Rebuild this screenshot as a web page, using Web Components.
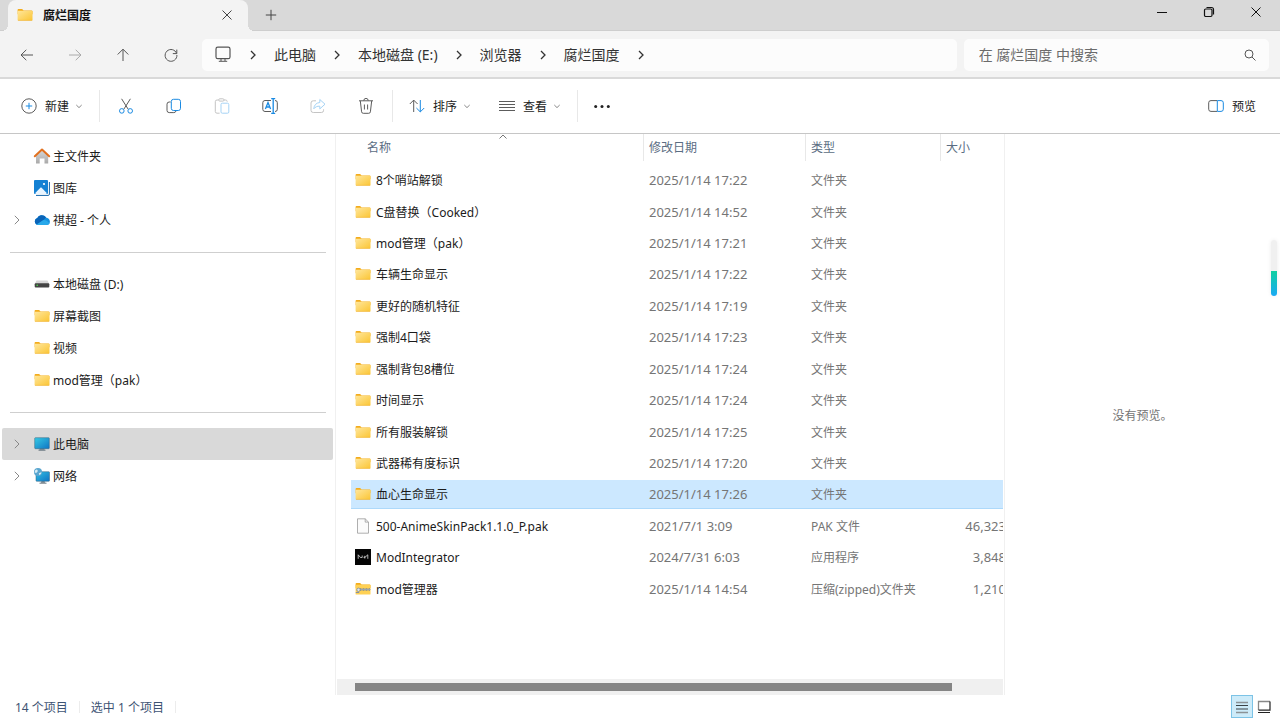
<!DOCTYPE html>
<html lang="zh-CN">
<head>
<meta charset="utf-8">
<title>腐烂国度</title>
<style>
  html, body { margin: 0; height: 100%; }
  body {
    font-family: "Noto Sans", "Noto Sans CJK SC", sans-serif;
    font-size: 12px;
    line-height: 16px;
    color: #1b1b1b;
    background: #fff;
    overflow: hidden;
  }
</style>
</head>
<body>
<file-explorer></file-explorer>

<script>
const ICONS = {
  folder: `<defs><linearGradient id="f" x1="0" y1="0" x2="1" y2="1"><stop offset="0" stop-color="#ffe69a"/><stop offset="1" stop-color="#fbc534"/></linearGradient></defs>
    <path d="M.6 2.900c0-.6.3-1 .9-1h3.600l1.500 1.500h8c.6 0 .9.3.9.8v3H.6z" fill="#f3ac1c"/>
    <rect x=".6" y="3.800" width="14.900" height="9.800" rx=".7" fill="url(#f)"/><path d="M1 13.400h14.100" stroke="#eeb02c" stroke-width=".6"/>`,
  home: `<defs><linearGradient id="h" x1="0" y1="0" x2="0" y2="1"><stop offset="0" stop-color="#d9d9d9"/><stop offset="1" stop-color="#a9a9a9"/></linearGradient></defs>
    <path d="M2 7l6-5.200L14.200 7v8.500H10.500V10.500H5.700v5H2z" fill="url(#h)"/><path d="M.8 8.200L8 1.500l7.200 6.700" fill="none" stroke="#e2711f" stroke-width="2" stroke-linejoin="round" stroke-linecap="round"/>`,
  gallery: `<path d="M15.400 2v12.200c0 .7-.4 1.200-1.200 1.200H2" fill="none" stroke="#1565a8" stroke-width="1"/><rect x="0" y="0" width="14" height="14" rx="1" fill="#1481d3"/>
    <path d="M1.500 14v-1.300l4.900-5c.4-.4.8-.4 1.200 0l4.900 5V14z" fill="#e9f5ff"/><circle cx="10" cy="4" r="1.100" fill="#fff"/>`,
  cloud: `<path d="M4 13a3.600 3.600 0 01-.6-7A5 5 0 0112 5.500c2 .3 3.900 1.800 3.900 4a3.500 3.500 0 01-3.500 3.500z" fill="#1490df"/>
    <path d="M3.400 6A5 5 0 0112 5.500L8.500 9 3 12.800A3.600 3.600 0 013.400 6z" fill="#0a64b8"/><path d="M2.500 12.500L9 8.300c1.500-.8 3.500-.4 6.500 2.900a3.500 3.500 0 01-3.100 1.800H4z" fill="#28a8ea"/>`,
  disk: `<path d="M2.500 4.500h11L15.200 8H.8z" fill="#d7d7d7"/><rect x=".7" y="7.200" width="14.600" height="4.300" rx="1" fill="#444"/><circle cx="3.200" cy="9.200" r=".8" fill="#4de04d"/>`,
  pc: `<defs><linearGradient id="p" x1="0" y1="0" x2="1" y2="1"><stop offset="0" stop-color="#37cbe4"/><stop offset="1" stop-color="#0e74c4"/></linearGradient></defs>
    <path d="M6 12h4l.8 2.200H5.200z" fill="#8d979f"/><path d="M4.500 14.200h7" stroke="#6f7b84"/><rect x=".7" y="1.700" width="14.600" height="11" rx=".7" fill="url(#p)" stroke="#35617c" stroke-width=".5"/>`,
  network: `<defs><linearGradient id="n" x1="0" y1="0" x2="1" y2="1"><stop offset="0" stop-color="#33bfe2"/><stop offset="1" stop-color="#0e74c4"/></linearGradient></defs>
    <path d="M7.500 13h3l.8 2H6.700z" fill="#8d979f"/><path d="M5.500 15.200h7" stroke="#6f7b84"/><rect x="2" y="3.700" width="13.500" height="9.600" rx=".7" fill="url(#n)" stroke="#35617c" stroke-width=".5"/>
    <circle cx="4" cy="4" r="4" fill="#5aa6cf"/><path d="M1.200 2.200C3 .8 4 2 3.600 3.500S1.600 5 .6 4.500zM4.800 5.200l2.600-.9c0 1.200-.8 2.300-2 2.900z" fill="#d8edf6"/>`,
  file: `<path d="M2.500.8h7.700l3.300 3.300v11.100h-11z" fill="#fbfbfb" stroke="#9a9a9a" stroke-width=".8"/><path d="M10.200.8v3.300h3.300" fill="none" stroke="#9a9a9a" stroke-width=".8"/>`,
  app: `<rect width="16" height="16" fill="#050505"/><path d="M3.200 9.800V5.800l2.300 2.700h1.700V6.500M8.500 8.300h1.500l2.800-2.500v4M9.800 6.800v2.800" fill="none" stroke="#ddd" stroke-width=".8"/>`,
  zip: `<path d="M.6 2.900c0-.6.3-1 .9-1h3.600l1.500 1.500h8c.6 0 .9.3.9.8v3H.6z" fill="#f3ac1c"/><rect x=".6" y="3.800" width="14.900" height="9.800" rx=".7" fill="#ffd154"/>
    <path d="M5 8.500h10.500" stroke="#7e8a96" stroke-width="2.400" stroke-dasharray="1 .5"/><path d="M5 8.500h10.500" stroke="#9aa4ae" stroke-width="1"/><circle cx="3.500" cy="8.800" r="1.700" fill="#dfe5ea" stroke="#7e8a96" stroke-width=".8"/><path d="M.8 11.500h3.400" stroke="#8792a0"/>`,
  close: `<path d="M3.500 3.500l9 9M12.500 3.500l-9 9" class="s"/>`,
  plus: `<path d="M8 2.800v10.400M2.800 8h10.400" class="s"/>`,
  minimize: `<path d="M3 8.500h10" class="s"/>`,
  maximize: `<rect x="3.500" y="5" width="7.500" height="7.500" rx="1.200" class="s" stroke-width="1.200"/><path d="M5.500 3.500h5a2 2 0 012 2v5" class="s" stroke-width="1.200"/>`,
  back: `<path d="M14 8H2.200M7.300 2.800L2 8l5.300 5.200" class="s"/>`,
  forward: `<path d="M2 8h11.800M8.700 2.800L14 8l-5.300 5.200" class="s"/>`,
  up: `<path d="M8 14V2.200M2.700 7.500L8 2.200l5.300 5.300" class="s"/>`,
  refresh: `<path d="M13.600 6.500A5.900 5.900 0 1013.900 8" class="s"/><path d="M13.800 2.600v4h-4" class="s"/>`,
  monitor: `<rect x="1" y=".2" width="14" height="11.500" rx="1.800" class="s" stroke-width="1.200"/><path d="M6 11.700v2.300M10 11.700v2.300M3.800 14.300h8.400" class="s"/>`,
  chevron: `<path d="M6 4l4 4-4 4" class="s" stroke-width="1.300"/>`,
  thin: `<path d="M5.800 3.800L10 8l-4.200 4.200" class="s"/>`,
  down: `<path d="M5.300 7L8 9.600 10.700 7" class="s"/>`,
  sorted: `<path d="M4.500 9.500L8 6l3.500 3.500" class="s"/>`,
  search: `<circle cx="7" cy="7" r="4" class="s"/><path d="M10 10l3.500 3.500" class="s"/>`,
  add: `<circle cx="8" cy="8" r="7.200" class="s"/><path d="M8 4.800v6.400M4.800 8h6.400" class="b"/>`,
  cut: `<path d="M3.600.8l6.500 10.300M12.400.8L5.900 11.100" class="s"/><circle cx="3.800" cy="12.900" r="2.300" class="b"/><circle cx="12.200" cy="12.900" r="2.300" class="b"/>`,
  copy: `<path d="M4.600 4H3.200A2.200 2.200 0 001 6.200v6.200a2.200 2.200 0 002.200 2.200h4.600A2.200 2.200 0 0010 13" class="s"/><rect x="5.300" y="1.300" width="9.200" height="11.200" rx="2.200" class="b"/>`,
  paste: `<path d="M4.600 2H3a1.700 1.700 0 00-1.700 1.700v9.800A1.700 1.700 0 003 15.200h2.600M10 2h1.500c1 0 1.700.7 1.700 1.700" class="s"/><rect x="4.700" y=".8" width="5.300" height="2.300" rx="1.100" class="s"/><rect x="7" y="5.200" width="7.800" height="10" rx="1.300" class="b"/>`,
  rename: `<path d="M9 2.500H3A2.200 2.200 0 00.8 4.700v6.600A2.200 2.200 0 003 13.500h6M13 2.500a2.200 2.200 0 012.300 2.200v6.600a2.200 2.200 0 01-2.300 2.200" class="s"/><path d="M3.400 11L6 4.600 8.600 11M4.300 9h3.400M11.200.7v14.600M9.200.7h4M9.200 15.300h4" class="b" stroke-width="1.300"/>`,
  share: `<path d="M6 2.800H3.300A2.200 2.200 0 001 5v7.300a2.200 2.200 0 002.300 2.200h8a2.200 2.200 0 002.300-2.200v-1" class="s"/><path d="M9.800 1.500l5.200 4.700-5.200 4.700V8.200C7.200 8 5.300 8.900 3.800 10.800c.3-3.600 2.300-6 6-6.300z" class="b" stroke-linejoin="round"/>`,
  trash: `<path d="M1 2.800h14M5.800 2.600a2.200 2.200 0 014.400 0M2.300 2.800l1.300 11a1.700 1.700 0 001.700 1.500h5.400a1.700 1.700 0 001.700-1.500l1.300-11M6.400 6.500v5M9.600 6.500v5" class="s"/>`,
  sort: `<path d="M4.700 14V2.200M.8 6l3.900-3.900L8.600 6" class="s"/><path d="M11.300 2v11.800M7.400 10l3.900 3.900 3.900-3.900" class="b"/>`,
  lines: `<path d="M0 3.500h16M0 6.500h16M0 9.500h16M0 12.500h16" class="s"/>`,
  more: `<circle cx="1.700" cy="8.500" r="1.500" fill="#222"/><circle cx="8" cy="8.500" r="1.500" fill="#222"/><circle cx="14.300" cy="8.500" r="1.500" fill="#222"/>`,
  pane: `<path d="M9 2.600H3A2.200 2.200 0 00.7 4.800v6.400A2.200 2.200 0 003 13.400h6" class="s"/><path d="M9.300 2.600H13a2.200 2.200 0 012.300 2.200v6.400a2.200 2.200 0 01-2.300 2.200H9.300z" class="b"/>`,
  details: `<path d="M2 3.500h12M2 13.500h12" stroke="#8b9296" stroke-width="1.500"/><path d="M2 6.500h12M2 10h12" stroke="#3a4246" stroke-width="1.200"/>`,
  large: `<path d="M2.500 11V2.500H14" fill="none" stroke="#888" stroke-width="1.300"/><path d="M14 2.500v8.700H2.500M2 13.500h12" fill="none" stroke="#222" stroke-width="1.200"/>`
};

function define(name, css, html, setup) {
  const template = document.createElement('template');
  template.innerHTML = `<style>*{box-sizing:border-box}button,input{font:inherit;color:inherit;border:0;background:none;padding:0;margin:0}${css}</style>${html}`;
  customElements.define(name, class extends HTMLElement {
    constructor() {
      super();
      this.attachShadow({ mode: 'open' }).append(template.content.cloneNode(true));
    }
    connectedCallback() { if (setup) setup(this, this.shadowRoot); }
  });
}

define('x-icon', `
  :host { display: block; flex: none; width: 16px; height: 16px; }
  svg { display: block; width: 100%; height: 100%; overflow: visible; }
  .s { fill: none; stroke: currentColor; }
  .b { fill: none; stroke: var(--accent, #1a8ae2); }`,
  `<svg viewBox="0 0 16 16" aria-hidden="true"></svg>`,
  (host, root) => { root.querySelector('svg').innerHTML = ICONS[host.getAttribute('name')]; });

define('title-bar', `
  :host { display: flex; align-items: flex-start; height: 31px; background: #d9d9d9; box-shadow: inset 0 -1px #cecece; padding: 0 1px 0 8px; }
  .tab { position: relative; display: flex; align-items: center; width: 240px; height: 31px; padding: 0 13px 2px 9px; background: #f3f3f3; border-radius: 8px 8px 0 0; }
  .tab::before, .tab::after { content: ""; position: absolute; bottom: 0; width: 6px; height: 6px; }
  .tab::before { right: 100%; background: radial-gradient(circle at 0 0, transparent 6px, #f3f3f3 6px); }
  .tab::after { left: 100%; background: radial-gradient(circle at 100% 0, transparent 6px, #f3f3f3 6px); }
  .title { flex: 1; margin-left: 10px; padding-top: 2px; font-weight: 700; color: #111; }
  button { display: grid; place-items: center; height: 29px; color: #444; }
  .new { width: 46px; }
  .window { display: flex; margin-left: auto; }
  .window button { width: 47px; height: 24px; color: #111; }`,
  `<div class="tab"><x-icon name="folder"></x-icon><span class="title">腐烂国度</span><button aria-label="关闭标签页"><x-icon name="close"></x-icon></button></div>
   <button class="new" aria-label="新标签页"><x-icon name="plus"></x-icon></button>
   <div class="window"><button aria-label="最小化"><x-icon name="minimize"></x-icon></button><button aria-label="还原"><x-icon name="maximize"></x-icon></button><button aria-label="关闭"><x-icon name="close"></x-icon></button></div>`);

define('address-bar', `
  :host { display: flex; height: 48px; padding: 8px 11px 6px 3px; background: #f3f3f3; border-bottom: 2px solid #d9d9d9; font-size: 14px; line-height: 20px; color: #333; }
  button { flex: none; display: grid; place-items: center; width: 48px; height: 32px; color: #555; }
  button:disabled { color: #aaa; }
  nav, form { display: flex; align-items: center; background: #fcfcfc; border-radius: 5px; min-width: 0; }
  nav { flex: 753 0 0; margin: 0 7px; padding-left: 13px; }
  nav a { color: inherit; text-decoration: none; white-space: nowrap; }
  nav x-icon[name="chevron"] { margin: 0 13px; }
  nav x-icon[name="monitor"] { margin-right: 1px; color: #555; }
  form { flex: 307 0 0; padding-right: 3px; }
  input { flex: 1; min-width: 0; padding-left: 15px; outline: 0; }
  input::placeholder { color: #6b6b6b; opacity: 1; }
  form button { width: 32px; }`,
  `<button aria-label="后退"><x-icon name="back"></x-icon></button><button disabled aria-label="前进"><x-icon name="forward"></x-icon></button><button aria-label="向上"><x-icon name="up"></x-icon></button><button aria-label="刷新"><x-icon name="refresh"></x-icon></button>
   <nav aria-label="路径"><x-icon name="monitor"></x-icon><x-icon name="chevron"></x-icon><a href="#pc">此电脑</a><x-icon name="chevron"></x-icon><a href="#e">本地磁盘 (E:)</a><x-icon name="chevron"></x-icon><a href="#browser">浏览器</a><x-icon name="chevron"></x-icon><a href="#decay">腐烂国度</a><x-icon name="chevron"></x-icon></nav>
   <form role="search"><input type="text" aria-label="搜索" placeholder="在 腐烂国度 中搜索"><button type="button" aria-label="搜索"><x-icon name="search"></x-icon></button></form>`);

define('tool-button', `
  :host { display: block; }
  button { display: flex; align-items: center; justify-content: center; gap: 8px; height: 32px; min-width: var(--min, 48px); padding: 0 14px; color: #5c5c5c; }
  .label { display: flex; align-items: center; gap: 2px; color: #222; white-space: nowrap; }
  .text { padding-top: 2px; }
  .label x-icon { margin-right: -4px; color: #888; }
  :host([disabled]) button { color: #c4c4c4; }
  :host([disabled]) { --accent: #a5d3f5; }`,
  `<button></button>`,
  (host, root) => {
    const button = root.querySelector('button');
    const icon = document.createElement('x-icon');
    icon.setAttribute('name', host.getAttribute('icon'));
    button.replaceChildren(icon);
    if (host.hasAttribute('disabled')) button.disabled = true;
    if (host.hasAttribute('label')) { button.setAttribute('aria-label', host.getAttribute('label')); return; }
    const label = document.createElement('span');
    label.className = 'label';
    label.innerHTML = '<span class="text"><slot></slot></span>' + (host.hasAttribute('menu') ? '<x-icon name="down"></x-icon>' : '');
    button.append(label);
  });

define('command-bar', `
  :host { display: flex; align-items: center; height: 55px; padding: 0 10px 0 7px; background: #fff; border-bottom: 1px solid #c6c6c6; }
  i { width: 1px; height: 32px; margin: 0 2px; background: #e8e8e8; }
  .compact { --min: 44px; }
  .end { margin-left: auto; }`,
  `<tool-button icon="add" menu>新建</tool-button><i></i>
   <tool-button icon="cut" label="剪切"></tool-button><tool-button icon="copy" label="复制"></tool-button><tool-button icon="paste" label="粘贴" disabled></tool-button><tool-button icon="rename" label="重命名"></tool-button><tool-button icon="share" label="共享" disabled></tool-button><tool-button icon="trash" label="删除"></tool-button><i></i>
   <tool-button icon="sort" menu>排序</tool-button><tool-button icon="lines" menu>查看</tool-button><i></i>
   <tool-button class="compact" icon="more" label="更多"></tool-button><tool-button class="end" icon="pane">预览</tool-button>`);

define('nav-item', `
  :host { display: block; }
  a { display: flex; align-items: center; height: 32px; margin: 0 2px; padding-left: 7px; border-radius: 2px; color: #1b1b1b; text-decoration: none; white-space: nowrap; }
  :host([selected]) a { background: #d9d9d9; }
  .arrow { width: 16px; height: 16px; margin-right: 9px; color: #888; }
  .icon { margin-right: 3px; }
  .text { padding-top: 2px; }`,
  `<a href="#"><span class="arrow"></span><span class="icon"></span><span class="text"><slot></slot></span></a>`,
  (host, root) => {
    root.querySelector('.icon').innerHTML = `<x-icon name="${host.getAttribute('icon')}"></x-icon>`;
    if (host.hasAttribute('expandable')) root.querySelector('.arrow').innerHTML = '<x-icon name="thin"></x-icon>';
  });

define('side-nav', `
  :host { display: block; width: 336px; flex: none; padding-top: 6px; border-right: 1px solid #f0f0f0; }
  hr { height: 1px; margin: 16px 9px 15px 10px; border: 0; background: #cfcfcf; }`,
  `<nav aria-label="导航窗格"><nav-item icon="home">主文件夹</nav-item><nav-item icon="gallery">图库</nav-item><nav-item icon="cloud" expandable>祺超 - 个人</nav-item><hr>
   <nav-item icon="disk">本地磁盘 (D:)</nav-item><nav-item icon="folder">屏幕截图</nav-item><nav-item icon="folder">视频</nav-item><nav-item icon="folder">mod管理（pak）</nav-item><hr>
   <nav-item icon="pc" expandable selected>此电脑</nav-item><nav-item icon="network" expandable>网络</nav-item></nav>`);

const FILES = [
  ['folder', '8个哨站解锁', '2025/1/14 17:22', '文件夹', ''],
  ['folder', 'C盘替换（Cooked）', '2025/1/14 14:52', '文件夹', ''],
  ['folder', 'mod管理（pak）', '2025/1/14 17:21', '文件夹', ''],
  ['folder', '车辆生命显示', '2025/1/14 17:22', '文件夹', ''],
  ['folder', '更好的随机特征', '2025/1/14 17:19', '文件夹', ''],
  ['folder', '强制4口袋', '2025/1/14 17:23', '文件夹', ''],
  ['folder', '强制背包8槽位', '2025/1/14 17:24', '文件夹', ''],
  ['folder', '时间显示', '2025/1/14 17:24', '文件夹', ''],
  ['folder', '所有服装解锁', '2025/1/14 17:25', '文件夹', ''],
  ['folder', '武器稀有度标识', '2025/1/14 17:20', '文件夹', ''],
  ['folder', '血心生命显示', '2025/1/14 17:26', '文件夹', ''],
  ['file', '500-AnimeSkinPack1.1.0_P.pak', '2021/7/1 3:09', 'PAK 文件', '46,323'],
  ['app', 'ModIntegrator', '2024/7/31 6:03', '应用程序', '3,848'],
  ['zip', 'mod管理器', '2025/1/14 14:54', '压缩(zipped)文件夹', '1,210']
];

define('file-list', `
  :host { display: flex; flex-direction: column; flex: 1; min-width: 0; padding-right: 1px; border-right: 1px solid #f0f0f0; }
  .view { flex: 1; overflow: hidden; padding-left: 15px; }
  table { width: calc(100% + 3px); height: 471px; border-spacing: 0; table-layout: fixed; }
  th, td { padding: 0; text-align: left; font-weight: 400; white-space: nowrap; }
  th { position: relative; height: 31px; vertical-align: top; color: #5b6d83; }
  th div { height: 27px; padding: 6px 0 0 5px; border-left: 1px solid #e8e8e8; }
  th:first-child div { padding-left: 16px; border: 0; }
  th x-icon { position: absolute; top: -5px; left: 144px; color: #777; }
  .date { width: 162px; } .type { width: 135px; } .size { width: 66px; }
  td { padding-left: 6px; color: #757575; border: solid transparent; border-width: 1px 0 2px; background-clip: padding-box; }
  td:first-child { padding-left: 4px; color: #1b1b1b; }
  td:nth-child(2), td:nth-child(4) { font-size: 13px; }
  td:nth-child(3) { padding-top: 2px; }
  td:nth-child(4) { text-align: right; }
  .name { display: flex; align-items: center; gap: 5px; }
  .text { padding-top: 2px; }
  .selected td { background-color: #cce8ff; box-shadow: inset 0 -1px #add9fb; }
  .scroll { height: 16px; margin-left: 1px; padding: 4px 51px 4px 18px; background: #f0f0f0; }
  .thumb { height: 8px; background: #858585; }`,
  `<div class="view"><table><thead><tr><th><div>名称</div><x-icon name="sorted"></x-icon></th><th class="date"><div>修改日期</div></th><th class="type"><div>类型</div></th><th class="size"><div>大小</div></th></tr></thead><tbody></tbody></table></div>
   <div class="scroll"><div class="thumb"></div></div>`,
  (host, root) => {
    root.querySelector('tbody').innerHTML = FILES.map(([icon, name, date, type, size]) =>
      `<tr${name === '血心生命显示' ? ' class="selected"' : ''}><td><span class="name"><x-icon name="${icon}"></x-icon><span class="text">${name}</span></span></td><td>${date}</td><td>${type}</td><td>${size}</td></tr>`).join('');
  });

define('preview-pane', `
  :host { display: grid; place-items: center; width: 275px; flex: none; color: #757575; }
  p { margin: 0; padding-top: 2px; }`, `<p>没有预览。</p>`);

define('status-bar', `
  :host { display: flex; align-items: center; height: 23px; padding: 0 5px 0 15px; color: #3d5373; }
  span { padding-top: 2px; }
  i { width: 1px; height: 12px; margin: 0 11px; background: #ececec; }
  .views { display: flex; margin-left: auto; }
  button { display: grid; place-items: center; width: 22px; height: 23px; }
  .on { background: #cdebf9; border: 1px solid #7cc3e6; }`,
  `<span>14 个项目</span><i></i><span>选中 1 个项目</span><i></i>
   <div class="views"><button class="on" aria-label="详细信息"><x-icon name="details"></x-icon></button><button aria-label="大图标"><x-icon name="large"></x-icon></button></div>`);

define('edge-meter', `
  :host { position: absolute; right: 3px; top: 240px; display: block; width: 6px; border-radius: 3px; overflow: hidden; box-shadow: 0 0 4px #ececec; }
  .rest { height: 31px; background: #f0f0f0; }
  .level { height: 25px; background: linear-gradient(#0fd0a0, #1aa9f5); }`,
  `<div class="rest"></div><div class="level"></div>`);

define('file-explorer', `
  :host { display: flex; flex-direction: column; height: 100vh; position: relative; }
  main { display: flex; flex: 1; min-height: 0; }`,
  `<title-bar></title-bar><address-bar></address-bar><command-bar></command-bar>
   <main><side-nav></side-nav><file-list></file-list><preview-pane></preview-pane></main>
   <status-bar></status-bar><edge-meter></edge-meter>`);
</script>
</body>
</html>
